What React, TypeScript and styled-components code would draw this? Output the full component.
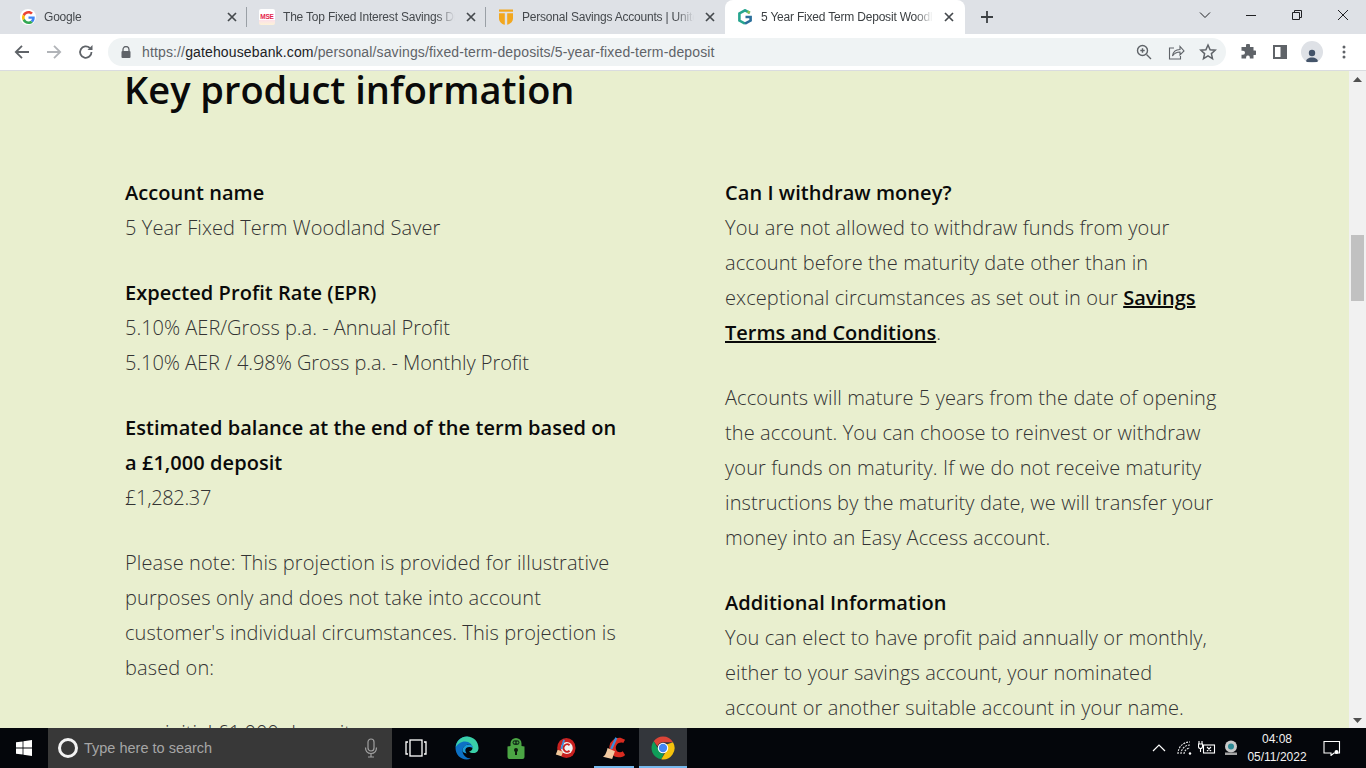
import styled, { createGlobalStyle } from "styled-components";
import type { ReactNode } from "react";

const GlobalStyle = createGlobalStyle`
  html, body {
    margin: 0;
    padding: 0;
    height: 100%;
    overflow: hidden;
    background: #e9efcf;
  }
`;

const Screen = styled.div`
  width: 1366px;
  height: 768px;
  display: flex;
  flex-direction: column;
  overflow: hidden;
  font-family: "Open Sans", sans-serif;
`;

/* browser chrome */

const TabStrip = styled.div`
  height: 34px;
  flex: none;
  display: flex;
  align-items: flex-end;
  padding-left: 8px;
  background: #dee1e6;
  font-family: "Liberation Sans", Arial, sans-serif;
`;

const Tab = styled.div<{ $active?: boolean; $divider?: boolean }>`
  position: relative;
  width: ${({ $active }) => ($active ? 240 : 239)}px;
  height: 34px;
  flex: none;
  display: flex;
  align-items: center;
  box-sizing: border-box;
  padding: 0 ${({ $active }) => ($active ? 8 : 7)}px 0 12px;
  gap: 8px;
  background: ${({ $active }) => ($active ? "#ffffff" : "transparent")};
  border-radius: ${({ $active }) => ($active ? "8px 8px 0 0" : "0")};
  &::after {
    content: "";
    display: ${({ $divider }) => ($divider ? "block" : "none")};
    position: absolute;
    right: 0;
    top: 7px;
    width: 1px;
    height: 20px;
    background: #9aa0a6;
  }
`;

const Favicon = styled.span`
  width: 16px;
  height: 16px;
  flex: none;
  display: flex;
`;

const TabTitle = styled.span<{ $active?: boolean }>`
  flex: 1;
  min-width: 0;
  font-size: 12px;
  line-height: 16px;
  letter-spacing: -0.2px;
  white-space: nowrap;
  overflow: hidden;
  color: ${({ $active }) => ($active ? "#3c4043" : "#45494d")};
  -webkit-mask-image: linear-gradient(to right, #000 calc(100% - 18px), transparent);
  mask-image: linear-gradient(to right, #000 calc(100% - 18px), transparent);
`;

const TabClose = styled.svg`
  width: 16px;
  height: 16px;
  flex: none;
  color: #45494d;
`;

const NewTab = styled.svg`
  width: 16px;
  height: 16px;
  flex: none;
  margin-left: 14px;
  align-self: center;
  color: #3c4043;
`;

const WindowControls = styled.div`
  margin-left: auto;
  align-self: stretch;
  display: flex;
  align-items: center;
  color: #202124;
`;

const WindowButton = styled.span`
  width: 46px;
  height: 30px;
  display: flex;
  align-items: center;
  justify-content: center;
  margin-top: -4px;
`;

const Toolbar = styled.div`
  height: 36px;
  flex: none;
  display: flex;
  align-items: center;
  background: #ffffff;
  border-bottom: 1px solid #dadce0;
`;

const NavButton = styled.span<{ $muted?: boolean }>`
  width: 32px;
  height: 32px;
  flex: none;
  display: flex;
  align-items: center;
  justify-content: center;
  color: ${({ $muted }) => ($muted ? "#b1b4b8" : "#5f6368")};
`;

const NavGroup = styled.div`
  display: flex;
  align-items: center;
  padding-left: 6px;
`;

const Omnibox = styled.div`
  width: 1118px;
  height: 28px;
  margin-left: 6px;
  flex: none;
  display: flex;
  align-items: center;
  box-sizing: border-box;
  padding: 0 8px 0 12px;
  border-radius: 14px;
  background: #eff3f4;
  color: #5f6368;
`;

const LockIcon = styled.svg`
  width: 12px;
  height: 12px;
  flex: none;
  margin-right: 10px;
  color: #5f6368;
`;

const Url = styled.span`
  flex: 1;
  font-family: "Liberation Sans", Arial, sans-serif;
  font-size: 14px;
  letter-spacing: 0.14px;
  white-space: nowrap;
  color: #5f6368;
`;

const UrlHost = styled.span`
  color: #202124;
`;

const OmniIcons = styled.div`
  display: flex;
  align-items: center;
  gap: 12px;
  color: #5f6368;
`;

const Extensions = styled.div`
  display: flex;
  align-items: center;
  margin-left: 6px;
  color: #5f6368;
`;

const ExtButton = styled.span`
  width: 32px;
  height: 32px;
  display: flex;
  align-items: center;
  justify-content: center;
`;

const Avatar = styled.span`
  width: 22px;
  height: 22px;
  border-radius: 50%;
  background: #dee1e6;
  display: flex;
  align-items: flex-end;
  justify-content: center;
  overflow: hidden;
`;

/* page */

const Viewport = styled.div`
  flex: 1;
  min-height: 0;
  display: flex;
  overflow: hidden;
`;

const Page = styled.main`
  flex: 1;
  min-width: 0;
  overflow: hidden;
  box-sizing: border-box;
  padding-left: 125px;
  background: #e9efcf;
  color: #333333;
`;

const Title = styled.h1`
  margin: -2px 0 0 -1px;
  height: 106px;
  font-size: 38px;
  line-height: 40px;
  font-weight: 600;
  color: #0a0a0a;
`;

const Columns = styled.div`
  display: grid;
  grid-template-columns: 500px 500px;
  column-gap: 100px;
`;

const Column = styled.div`
  display: flex;
  flex-direction: column;
  gap: 30px;
`;

const Block = styled.div`
  font-size: 20px;
  line-height: 35px;
  font-weight: 300;
  letter-spacing: 0.11px;
  color: #333333;
`;

const Line = styled.div<{ $tracking: number }>`
  letter-spacing: ${({ $tracking }) => $tracking}px;
`;

const Label = styled.div`
  font-weight: 600;
  letter-spacing: 0.05px;
  color: #0a0a0a;
`;

const TermsLink = styled.a`
  font-weight: 600;
  letter-spacing: 0;
  color: #0a0a0a;
  text-decoration: underline;
`;

const BulletList = styled.ul`
  margin: 0;
  padding-left: 40px;
  font-size: 20px;
  line-height: 35px;
  font-weight: 300;
`;

const ScrollTrack = styled.div`
  position: relative;
  width: 17px;
  flex: none;
  background: #f1f1f1;
`;

const ScrollThumb = styled.div`
  position: absolute;
  left: 2px;
  top: 164px;
  width: 13px;
  height: 66px;
  background: #c1c1c1;
`;

const ScrollArrow = styled.svg<{ $down?: boolean }>`
  position: absolute;
  left: 4px;
  width: 9px;
  height: 5px;
  color: #505050;
  ${({ $down }) => ($down ? "bottom: 5px; transform: rotate(180deg);" : "top: 6px;")}
`;

/* windows taskbar */

const Taskbar = styled.footer`
  height: 40px;
  flex: none;
  display: flex;
  align-items: stretch;
  background: #04060b;
  color: #ffffff;
  font-family: "Liberation Sans", Arial, sans-serif;
`;

const StartButton = styled.span`
  width: 48px;
  flex: none;
  display: flex;
  align-items: center;
  justify-content: center;
`;

const SearchBox = styled.div`
  width: 344px;
  flex: none;
  display: flex;
  align-items: center;
  box-sizing: border-box;
  padding-left: 10px;
  background: #383838;
`;

const CortanaRing = styled.span`
  width: 14px;
  height: 14px;
  flex: none;
  border: 3px solid #f2f2f2;
  border-radius: 50%;
`;

const SearchHint = styled.span`
  flex: 1;
  margin-left: 6px;
  font-size: 14.5px;
  color: #a6a6a6;
`;

const MicIcon = styled.svg`
  width: 16px;
  height: 20px;
  flex: none;
  margin-right: 13px;
  color: #a0a0a0;
`;

const TaskSlot = styled.span<{ $open?: boolean; $focused?: boolean }>`
  position: relative;
  width: 48px;
  margin-left: 1px;
  flex: none;
  display: flex;
  align-items: center;
  justify-content: center;
  background: ${({ $focused }) => ($focused ? "#33363b" : "transparent")};
  &:first-child {
    width: 46px;
    margin-right: 3px;
  }
  &::after {
    content: "";
    display: ${({ $open }) => ($open ? "block" : "none")};
    position: absolute;
    left: ${({ $focused }) => ($focused ? "0" : "4px")};
    right: ${({ $focused }) => ($focused ? "0" : "4px")};
    bottom: 0;
    height: 2px;
    background: #76b9ed;
  }
`;

const Tasks = styled.div`
  display: flex;
  align-items: stretch;
`;

const Tray = styled.div`
  margin-left: auto;
  padding-right: 10px;
  display: flex;
  align-items: center;
`;

const TraySlot = styled.span<{ $w: number }>`
  width: ${({ $w }) => $w}px;
  flex: none;
  display: flex;
  align-items: center;
  justify-content: center;
`;

const Clock = styled.div`
  width: 62px;
  margin-left: 2px;
  text-align: center;
  font-size: 12px;
  line-height: 18px;
  color: #f2f2f2;
`;

/* little drawings */

const GoogleBadge = styled.span`
  width: 16px;
  height: 16px;
  border-radius: 50%;
  background: #ffffff;
  display: flex;
  align-items: center;
  justify-content: center;
`;

const GoogleIcon = () => (
  <GoogleBadge>
    <svg viewBox="0 0 48 48" width="13" height="13">
      <path fill="#ea4335" d="M24 9.500c3.500 0 6.700 1.200 9.200 3.600l6.900-6.900C35.900 2.400 30.500 0 24 0 14.600 0 6.500 5.400 2.600 13.200l8 6.200C12.500 13.600 17.800 9.500 24 9.500z" />
      <path fill="#4285f4" d="M47 24.500c0-1.600-.1-3.100-.4-4.500H24v9h13c-.6 3-2.200 5.500-4.800 7.200l7.700 6C44.300 38.100 47 31.900 47 24.500z" />
      <path fill="#fbbc05" d="M10.600 28.600C10.100 27.200 9.800 25.600 9.800 24s.3-3.200.8-4.600l-8-6.200C.9 16.500 0 20.100 0 24s.9 7.500 2.600 10.800l8-6.200z" />
      <path fill="#34a853" d="M24 48c6.500 0 11.900-2.100 15.900-5.800l-7.700-6c-2.100 1.400-4.900 2.300-8.200 2.300-6.200 0-11.500-4.100-13.400-9.900l-8 6.200C6.500 42.600 14.600 48 24 48z" />
    </svg>
  </GoogleBadge>
);

const MseBadge = styled.span`
  width: 16px;
  height: 16px;
  border-radius: 2px;
  background: linear-gradient(#ffffff 70%, #fbe0e8 70%, #fdf3d8);
  color: #e4244c;
  font-size: 6.500px;
  font-weight: 700;
  line-height: 15px;
  text-align: center;
  letter-spacing: -0.2px;
`;

const ShieldIcon = () => (
  <svg viewBox="0 0 16 16" width="16" height="16">
    <rect x="1" y="0.500" width="14" height="2.200" fill="#f2a71f" />
    <path fill="#f2a71f" d="M1 4.300H6.800V15.800C3.500 15 1 12.500 1 9.500zM9.200 4.300H15V9.500C15 12.500 12.500 15 9.200 15.800z" />
  </svg>
);

const GatehouseIcon = () => (
  <svg viewBox="0 0 16 16" width="16" height="16" fill="none" strokeWidth="2.600">
    <path stroke="#27a58f" d="M12.800 3.900 8 1.300 2.400 4.400v7.200L8 14.700" />
    <path stroke="#2b6f9b" d="M8 14.700l5.600-3.100V8H8.500" />
    <path stroke="#8cc152" d="M12.800 3.900 10.500 2.600" />
  </svg>
);

const CloseGlyph = () => (
  <TabClose viewBox="0 0 16 16">
    <path d="M4 4l8 8M12 4l-8 8" stroke="currentColor" strokeWidth="1.700" />
  </TabClose>
);

const ChromeIcon = () => (
  <svg viewBox="0 0 48 48" width="24" height="24">
    <path fill="#db4437" d="M24 1a23 23 0 0 1 20 11.500H24a11.500 11.500 0 0 0-11 8L5.400 10.500A23 23 0 0 1 24 1z" />
    <path fill="#0f9d58" d="M5.400 10.500 15 27a10.500 10.500 0 0 0 11 8L20.500 46.700A23 23 0 0 1 5.400 10.500z" />
    <path fill="#f4c20d" d="M44 12.500A23 23 0 0 1 20.500 46.700L30.500 30a11 11 0 0 0 .5-13L44 12.500z" />
    <circle cx="24" cy="24" r="10.500" fill="#ffffff" />
    <circle cx="24" cy="24" r="8.300" fill="#4285f4" />
  </svg>
);

const EdgeIcon = () => (
  <svg viewBox="0 0 48 48" width="24" height="24">
    <path fill="#0c70c4" d="M24 1C11 1 1 11 1 24c0 13 10 23 22 23 3 0 6-.6 9-2-9 0-17-7-17-16 0-7 6-12 13-12 3 0 5 .5 7 2-1-9-5-18-11-18z" />
    <path fill="#3ad0a8" d="M24 1c13 0 23 10 23 23 0 6-4 10-10 10-4 0-7-1-9-3 3-.5 7-2.500 7-7 0-7-6-13-15-13C12 11 5 16 1.500 22 3 10 12 1 24 1z" />
    <path fill="#1a9bd7" d="M15 29c0-6 5-12 13-12 3 0 6 1 7 3 1 1.500 1 3 .5 4-4-3-10-3-13 0-3 3-2 8 1 11-5-1-8.500-3-8.500-6z" />
  </svg>
);

const VpnLockIcon = () => (
  <svg viewBox="0 0 18 22" width="18" height="22">
    <path fill="#4ba544" d="M3.500 9V6.500a5.500 5.500 0 0 1 11 0V9l3 .5V20a2 2 0 0 1-2 2h-13a2 2 0 0 1-2-2V9.500z" />
    <rect x="5.500" y="3.200" width="7" height="4.800" rx="2.400" fill="#13301a" />
    <circle cx="7.500" cy="5.500" r="0.900" fill="#4ba544" />
    <circle cx="10.500" cy="5.500" r="0.900" fill="#4ba544" />
    <circle cx="9" cy="13" r="2" fill="#0d1a0d" />
    <rect x="8" y="13" width="2" height="5" fill="#0d1a0d" />
  </svg>
);

const CleanerRoundIcon = () => (
  <svg viewBox="0 0 24 24" width="22" height="22">
    <ellipse cx="13.500" cy="12" rx="10" ry="11" fill="#c8201f" />
    <circle cx="14" cy="12" r="6.500" fill="#f2f2f2" />
    <path d="M17 9a4 4 0 1 0 0 6" fill="none" stroke="#c8201f" strokeWidth="2" />
    <path d="M11 3 8 13" stroke="#3b8edb" strokeWidth="2" />
    <path d="M4 14l6 2-2 5-6-2z" fill="#f0c79a" />
  </svg>
);

const CleanerBrushIcon = () => (
  <svg viewBox="0 0 26 26" width="24" height="24">
    <path d="M20 2a11 11 0 0 0-12 9c-.5 6 4 12 10 12 3 0 6-1 7-2.500l-2.500-4c-2 2-7 1.500-7.500-3-.4-4 3-7.500 8-6L25 4z" fill="#d92b20" />
    <path d="M15.500 2 10 14" stroke="#3b8edb" strokeWidth="2.500" />
    <path d="M6 13l8 3.500-3 8.500-10-2.500c2.500-1 4-5 5-9.500z" fill="#f1c9a0" />
  </svg>
);

const WindowsLogo = () => (
  <svg viewBox="0 0 16 16" width="16" height="16" fill="#ffffff">
    <path d="M0 2.300 6.600 1.400V7.500H0zM7.400 1.300 16 0V7.500H7.400zM0 8.400H6.600V14.600L0 13.700zM7.400 8.400H16V16L7.400 14.700z" />
  </svg>
);

const Section = ({ label, children }: { label?: ReactNode; children?: ReactNode }) => (
  <Block>
    {label && <Label>{label}</Label>}
    {children}
  </Block>
);

export default function App() {
  return (
    <Screen>
      <GlobalStyle />
      <TabStrip>
        <Tab $divider>
          <Favicon>
            <GoogleIcon />
          </Favicon>
          <TabTitle>Google</TabTitle>
          <CloseGlyph />
        </Tab>
        <Tab $divider>
          <Favicon>
            <MseBadge>MSE</MseBadge>
          </Favicon>
          <TabTitle>The Top Fixed Interest Savings Di</TabTitle>
          <CloseGlyph />
        </Tab>
        <Tab>
          <Favicon>
            <ShieldIcon />
          </Favicon>
          <TabTitle>Personal Savings Accounts | Unite</TabTitle>
          <CloseGlyph />
        </Tab>
        <Tab $active>
          <Favicon>
            <GatehouseIcon />
          </Favicon>
          <TabTitle $active>5 Year Fixed Term Deposit Woodl</TabTitle>
          <CloseGlyph />
        </Tab>
        <NewTab viewBox="0 0 16 16">
          <path d="M8 2v12M2 8h12" stroke="currentColor" strokeWidth="1.800" />
        </NewTab>
        <WindowControls>
          <WindowButton>
            <svg width="12" height="12" viewBox="0 0 12 12" fill="none" stroke="currentColor">
              <path d="M1 3.500l5 5 5-5" />
            </svg>
          </WindowButton>
          <WindowButton>
            <svg width="12" height="12" viewBox="0 0 12 12" stroke="currentColor">
              <path d="M1 6.500h10" />
            </svg>
          </WindowButton>
          <WindowButton>
            <svg width="12" height="12" viewBox="0 0 12 12" fill="none" stroke="currentColor">
              <path d="M1.500 3.500h7v7h-7zM3.500 3.500v-2h7v7h-2" />
            </svg>
          </WindowButton>
          <WindowButton>
            <svg width="12" height="12" viewBox="0 0 12 12" stroke="currentColor">
              <path d="M1 1l10 10M11 1L1 11" />
            </svg>
          </WindowButton>
        </WindowControls>
      </TabStrip>

      <Toolbar>
        <NavGroup>
          <NavButton>
            <svg width="16" height="16" viewBox="0 0 16 16" fill="none" stroke="currentColor" strokeWidth="1.800">
              <path d="M15 8H2M8 1.800 1.800 8 8 14.200" />
            </svg>
          </NavButton>
          <NavButton $muted>
            <svg width="16" height="16" viewBox="0 0 16 16" fill="none" stroke="currentColor" strokeWidth="1.800">
              <path d="M1 8h13M8 1.800 14.200 8 8 14.200" />
            </svg>
          </NavButton>
          <NavButton>
            <svg width="16" height="16" viewBox="0 0 16 16" fill="none" stroke="currentColor" strokeWidth="1.800">
              <path d="M13.500 8A5.700 5.700 0 1 1 11.800 4" />
              <path d="M14.500 1v5h-5z" fill="currentColor" stroke="none" />
            </svg>
          </NavButton>
        </NavGroup>
        <Omnibox>
          <LockIcon viewBox="0 0 12 12">
            <path d="M3 5V3.500a3 3 0 0 1 6 0V5" fill="none" stroke="currentColor" strokeWidth="1.300" />
            <rect x="1.500" y="5" width="9" height="7" rx="1" fill="currentColor" />
          </LockIcon>
          <Url>
            https://<UrlHost>gatehousebank.com</UrlHost>/personal/savings/fixed-term-deposits/5-year-fixed-term-deposit
          </Url>
          <OmniIcons>
            <svg width="20" height="20" viewBox="0 0 20 20" fill="none" stroke="currentColor" strokeWidth="1.400">
              <circle cx="8.500" cy="8.500" r="5" />
              <path d="M12.500 12.500l4.500 4.500M6.300 8.500h4.400M8.500 6.300v4.400" />
            </svg>
            <svg width="20" height="20" viewBox="0 0 20 20" fill="none" stroke="currentColor" strokeWidth="1.100">
              <path d="M8 6H3.500v11h11v-3" />
              <path d="M6.500 14c.5-4 3.500-6.500 7.500-6.500V4.500L18 9l-4 4v-3c-3 0-5.500 1-7.500 4z" />
            </svg>
            <svg width="20" height="20" viewBox="0 0 20 20" fill="none" stroke="currentColor" strokeWidth="1.500">
              <path d="M10 3l2.100 4.700 5.100.5-3.800 3.400 1.100 5L10 13.900l-4.500 2.700 1.100-5L2.800 8.200l5.100-.5z" />
            </svg>
          </OmniIcons>
        </Omnibox>
        <Extensions>
          <ExtButton>
            <svg width="16" height="16" viewBox="0 0 16 16" fill="currentColor">
              <path d="M6 1.500a2 2 0 0 1 4 0V3h3.500v3.500H15a2.200 2.200 0 0 1 0 4.400h-1.500V14.500H9.800V13a1.900 1.900 0 0 0-3.700 0v1.500H1.500V10.800H3a2 2 0 0 0 0-4H1.500V3H6z" />
            </svg>
          </ExtButton>
          <ExtButton>
            <svg width="14" height="14" viewBox="0 0 14 14" fill="none" stroke="currentColor" strokeWidth="2">
              <path d="M1 1h12v12H1z" />
              <path d="M10 1v12" strokeWidth="5" />
            </svg>
          </ExtButton>
          <ExtButton>
            <Avatar>
              <svg width="14" height="16" viewBox="0 0 14 16" fill="#44546a">
                <circle cx="7" cy="6" r="3.200" />
                <path d="M1 15c0-3 2.500-4.500 6-4.500s6 1.500 6 4.500z" />
              </svg>
            </Avatar>
          </ExtButton>
          <ExtButton>
            <svg width="4" height="14" viewBox="0 0 4 14" fill="currentColor">
              <circle cx="2" cy="2" r="1.500" />
              <circle cx="2" cy="7" r="1.500" />
              <circle cx="2" cy="12" r="1.500" />
            </svg>
          </ExtButton>
        </Extensions>
      </Toolbar>

      <Viewport>
        <Page>
          <Title>Key product information</Title>
          <Columns>
            <Column>
              <Section label="Account name">
                <Line $tracking={0.07}>5 Year Fixed Term Woodland Saver</Line>
              </Section>
              <Section label="Expected Profit Rate (EPR)">
                <Line $tracking={0}>5.10% AER/Gross p.a. - Annual Profit</Line>
                <Line $tracking={-0.05}>5.10% AER / 4.98% Gross p.a. - Monthly Profit</Line>
              </Section>
              <Section label="Estimated balance at the end of the term based on a £1,000 deposit">
                <Line $tracking={-0.33}>£1,282.37</Line>
              </Section>
              <Section>
                Please note: This projection is provided for illustrative purposes only and does not
                take into account customer's individual circumstances. This projection is based on:
              </Section>
              <BulletList>
                <li>initial £1,000 deposit</li>
              </BulletList>
            </Column>
            <Column>
              <Section label="Can I withdraw money?">
                You are not allowed to withdraw funds from your account before the maturity date
                other than in exceptional circumstances as set out in our{" "}
                <TermsLink>Savings Terms and Conditions</TermsLink>.
              </Section>
              <Section>
                Accounts will mature 5 years from the date of opening the account. You can choose to
                reinvest or withdraw your funds on maturity. If we do not receive maturity
                instructions by the maturity date, we will transfer your money into an Easy Access
                account.
              </Section>
              <Section label="Additional Information">
                You can elect to have profit paid annually or monthly, either to your savings
                account, your nominated account or another suitable account in your name.
              </Section>
            </Column>
          </Columns>
        </Page>
        <ScrollTrack>
          <ScrollArrow viewBox="0 0 9 5">
            <path d="M4.500 0 9 5H0z" fill="currentColor" />
          </ScrollArrow>
          <ScrollThumb />
          <ScrollArrow $down viewBox="0 0 9 5">
            <path d="M4.500 0 9 5H0z" fill="currentColor" />
          </ScrollArrow>
        </ScrollTrack>
      </Viewport>

      <Taskbar>
        <StartButton>
          <WindowsLogo />
        </StartButton>
        <SearchBox>
          <CortanaRing />
          <SearchHint>Type here to search</SearchHint>
          <MicIcon viewBox="0 0 16 20" fill="none" stroke="currentColor" strokeWidth="1.200">
            <rect x="5" y="1" width="6" height="12" rx="3" />
            <path d="M2.500 9.500c0 4 2 6 5.500 6s5.500-2 5.500-6M8 15.500V19M5 19h6" />
          </MicIcon>
        </SearchBox>
        <Tasks>
          <TaskSlot>
            <svg width="22" height="18" viewBox="0 0 22 18" fill="none" stroke="#ffffff" strokeWidth="1.300">
              <rect x="5" y="1" width="12" height="16" />
              <path d="M3 3H1v12h2M19 3h2v12h-2" />
            </svg>
          </TaskSlot>
          <TaskSlot>
            <EdgeIcon />
          </TaskSlot>
          <TaskSlot>
            <VpnLockIcon />
          </TaskSlot>
          <TaskSlot>
            <CleanerRoundIcon />
          </TaskSlot>
          <TaskSlot $open>
            <CleanerBrushIcon />
          </TaskSlot>
          <TaskSlot $open $focused>
            <ChromeIcon />
          </TaskSlot>
        </Tasks>
        <Tray>
          <TraySlot $w={30}>
            <svg width="14" height="8" viewBox="0 0 14 8" fill="none" stroke="#ffffff" strokeWidth="1.200">
              <path d="M1 7l6-6 6 6" />
            </svg>
          </TraySlot>
          <TraySlot $w={22}>
            <svg width="16" height="16" viewBox="0 0 16 16" fill="none" stroke="#e8e8e8" strokeWidth="1.100">
              <path d="M1 14C1 7 6 2 13 2M4 14c0-5 4-9 9-9M7 14c0-3 3-6 6-6" strokeDasharray="2 1" />
              <circle cx="13" cy="13.500" r="1.200" fill="#ffffff" stroke="none" />
            </svg>
          </TraySlot>
          <TraySlot $w={22}>
            <svg width="18" height="16" viewBox="0 0 18 16" fill="none" stroke="#ffffff" strokeWidth="1.100">
              <rect x="5.500" y="5" width="11" height="8" />
              <path d="M9 7l4 4M13 7l-4 4M1 1v3M4 1v3M0.500 4h4v2.500a2 2 0 0 1-4 0zM2.500 8.500V12" />
            </svg>
          </TraySlot>
          <TraySlot $w={26}>
            <svg width="16" height="16" viewBox="0 0 16 16">
              <circle cx="8" cy="6.500" r="6" fill="#c9c9c9" />
              <circle cx="8" cy="6.500" r="3" fill="#2d8a96" />
              <rect x="2" y="12.500" width="12" height="2.500" fill="#a5a5a5" />
            </svg>
          </TraySlot>
          <Clock>
            04:08
            <br />
            05/11/2022
          </Clock>
          <TraySlot $w={48}>
            <svg width="18" height="16" viewBox="0 0 18 16" fill="none" stroke="#ffffff" strokeWidth="1.100">
              <path d="M1 1.500h15.500v11.500H11l-3 2.500V13H1z" />
              <circle cx="13.500" cy="12" r="2" fill="#ffffff" stroke="none" />
            </svg>
          </TraySlot>
        </Tray>
      </Taskbar>
    </Screen>
  );
}
